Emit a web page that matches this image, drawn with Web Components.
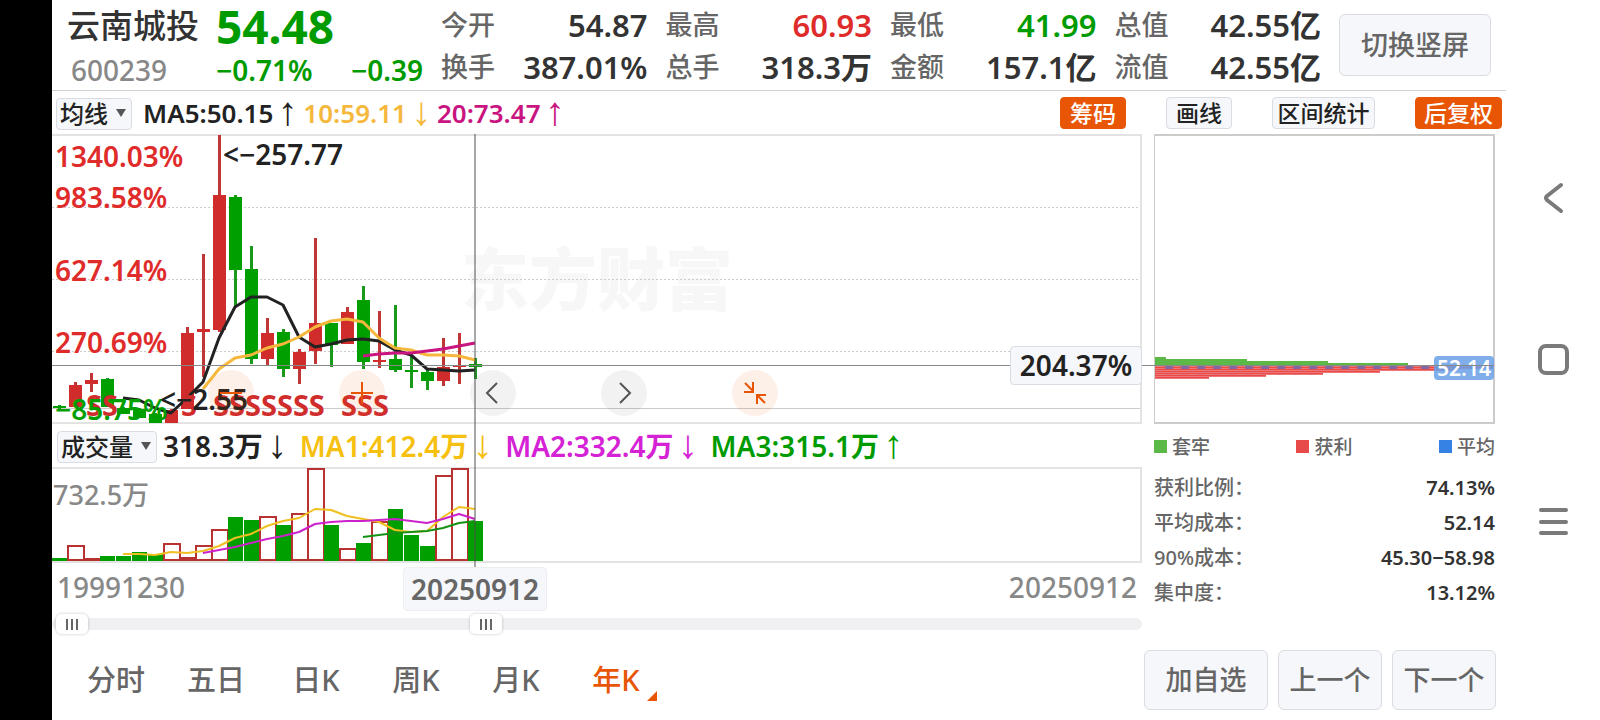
<!DOCTYPE html>
<html lang="zh-CN">
<head>
<meta charset="utf-8">
<meta name="viewport" content="width=device-width, initial-scale=1">
<title>云南城投 600239</title>
<style>
  body { margin: 0; background: #fff; font-family: "Noto Sans", "Noto Sans CJK SC", sans-serif; font-weight: 500; color: #222;
    --up: #d02c2c; --down: #009b00; --accent: #e85505; --muted: #888; --label: #666; --ink: #333; --panel: #f6f7fa; --edge: #d9dce2; --grid: #e3e3e3; }
</style>
</head>
<body>
<stock-app></stock-app>

<script>
const define = (name, html, setup) => customElements.define(name, class extends HTMLElement {
  connectedCallback() {
    if (this.shadowRoot) return;
    const t = document.createElement('template');
    t.innerHTML = '<style>*{box-sizing:border-box}button,select{font:inherit;color:inherit}</style>' + html;
    this.attachShadow({ mode: 'open' }).append(t.content.cloneNode(true));
    if (setup) setup(this, this.shadowRoot);
  }
});

/* Rounded push button; kind="accent" fills it with orange */
define('pill-button', `
<style>
  :host { display: block; font-size: 23px; height: 32px; color: #222; }
  button { display: block; width: 100%; height: 100%; padding: 0; border: 1px solid var(--edge); border-radius: 4px; background: var(--panel); white-space: nowrap; line-height: 28px; }
  :host([kind=accent]) button { background: var(--accent); border-color: var(--accent); color: #fff; }
  :host([size=large]) { font-size: 27px; height: 60px; color: var(--label); }
  :host([size=large]) button { border-radius: 6px; }
</style><button type="button"><slot></slot></button>`);

/* Drop-down of one indicator */
define('pick-list', `
<style>
  :host { display: block; position: relative; height: 32px; font-size: 24px; }
  select { appearance: none; width: 100%; height: 100%; margin: 0; padding: 0 0 0 3px; border: 1px solid var(--edge); border-radius: 4px; background: var(--panel); line-height: 28px; }
  i { position: absolute; right: 6px; top: 12px; border: 5px solid transparent; border-top: 8px solid #555; border-bottom: 0; pointer-events: none; }
</style><select></select><i></i>`, (el, root) => {
  const s = root.querySelector('select');
  s.setAttribute('aria-label', el.getAttribute('label'));
  s.add(new Option(el.getAttribute('value')));
});

/* Moving-average reading followed by a trend arrow */
define('ma-reading', `
<style>
  :host { display: flex; align-items: center; gap: 9px; white-space: nowrap; line-height: 32px; font-weight: 600; }
  .a { font: 40px/32px "Liberation Serif", serif; width: 11px; height: 34px; display: flex; justify-content: center; }
</style><span><slot></slot></span><span class="a"></span>`, (el, root) => {
  root.querySelector('.a').textContent = el.getAttribute('trend') === 'up' ? '↑' : '↓';
});

define('quote-stat', `
<style>
  :host { display: flex; justify-content: space-between; align-items: center; height: 42px; color: var(--ink); font-size: 31px; line-height: 42px; white-space: nowrap; }
  .l { font-size: 27px; color: var(--label); }
  .v { font-weight: 600; }
  :host([tone=up]) .v { color: #e02b2b; } :host([tone=down]) .v { color: var(--down); }
</style><span class="l"></span><span class="v"><slot></slot></span>`, (el, root) => {
  root.querySelector('.l').textContent = el.getAttribute('label');
});

define('quote-header', `
<style>
  :host { display: flex; align-items: center; gap: 18px; height: 91px; padding: 0 15px 0 15px; border-bottom: 1px solid #d0d0d0; }
  .id { display: grid; grid-template-columns: 149px 207px; height: 88px; grid-template-rows: 50px 38px; align-items: center; white-space: nowrap; }
  h1 { margin: 0; font-size: 33px; font-weight: 500; color: var(--ink); line-height: 48px; }
  .price { font-size: 46px; font-weight: 700; color: var(--down); line-height: 48px; }
  .code { font-size: 28px; color: var(--muted); padding-left: 4px; }
  .chg { display: flex; justify-content: space-between; font-size: 28px; font-weight: 600; color: var(--down); }
  .stats { flex: 1; display: grid; grid-template-columns: repeat(4, 1fr); column-gap: 18px; height: 86px; align-content: end; }
  pill-button { width: 152px; height: 62px; }
</style>
<div class="id"><h1>云南城投</h1><span class="price">54.48</span><span class="code">600239</span><div class="chg"><span>−0.71%</span><span>−0.39</span></div></div>
<div class="stats">
  <quote-stat label="今开">54.87</quote-stat><quote-stat label="最高" tone="up">60.93</quote-stat><quote-stat label="最低" tone="down">41.99</quote-stat><quote-stat label="总值">42.55亿</quote-stat>
  <quote-stat label="换手">387.01%</quote-stat><quote-stat label="总手">318.3万</quote-stat><quote-stat label="金额">157.1亿</quote-stat><quote-stat label="流值">42.55亿</quote-stat>
</div>
<pill-button size="large">切换竖屏</pill-button>`);

define('chart-toolbar', `
<style>
  :host { display: flex; align-items: center; height: 43px; padding: 0 4px; font-size: 26px; }
  pick-list { width: 76px; margin-right: 11px; }
  .ma { display: flex; gap: 10px; flex: 1; }
  .acts { display: grid; grid-template-columns: 66px 66px 103px 87px; gap: 40px; }
</style>
<pick-list label="指标" value="均线"></pick-list>
<div class="ma"><ma-reading trend="up">MA5:50.15</ma-reading><ma-reading trend="down" style="color:#f5b83d">10:59.11</ma-reading><ma-reading trend="up" style="color:#c9157f">20:73.47</ma-reading></div>
<div class="acts"><pill-button kind="accent">筹码</pill-button><pill-button>画线</pill-button><pill-button>区间统计</pill-button><pill-button kind="accent">后复权</pill-button></div>`);

const STEP = 16, cx = i => 7 + STEP * i;
const poly = (from, ys, color, w) =>
  `<polyline fill="none" stroke="${color}" stroke-width="${w}" stroke-linejoin="round" points="${ys.map((y, k) => cx(from + k) + ',' + y).join(' ')}"/>`;

/* Candles: [up?, high, bodyTop, bodyBottom, low] */
const CANDLES = [
  [0,271,272,274,275],[1,248,251,273,273],[1,239,246,250,258],[0,244,245,273,273],[0,273,274,280,280],[0,274,275,284,284],[0,279,280,289,289],[1,275,276,289,289],
  [1,193,199,275,275],[1,120,195,198,243],[1,1,61,196,198],[0,61,63,136,173],[0,112,135,225,230],[1,184,199,225,231],[0,195,198,235,243],[1,215,218,235,250],
  [1,104,189,217,230],[0,189,189,211,233],[1,173,178,210,210],[0,152,166,228,235],[1,177,226,228,234],[0,171,225,236,238],[0,222,236,238,254],[0,234,238,247,256],
  [1,204,233,247,252],[1,199,231,232,250],[0,224,230,233,245]];

define('candle-chart', `
<style>
  :host { display: block; position: relative; height: 290px; border: solid var(--grid); border-width: 2px 2px 2px 0; }
  svg { display: block; width: 100%; height: 290px; margin: -2px 0; overflow: visible; font-size: 28px; }
  .tools { position: absolute; left: 156px; top: 234px; display: flex; gap: 85px; }
  button { width: 46px; height: 46px; padding: 11px; border: 0; border-radius: 50%; background: rgba(0,0,0,.05); }
  button.o { background: rgba(232,85,5,.09); }
  button svg { width: 24px; height: 24px; margin: 0; fill: none; stroke: currentColor; stroke-width: 2; color: #555; }
  .o svg { color: var(--accent); }
</style>
<svg class="plot" role="img" aria-label="年K线"></svg>
<div class="tools">
  <button class="o" aria-label="缩小"><svg viewBox="0 0 24 24"><path d="M1 12H23"/></svg></button>
  <button class="o" aria-label="放大"><svg viewBox="0 0 24 24"><path d="M1 12H23M12 1V23"/></svg></button>
  <button aria-label="左移"><svg viewBox="0 0 24 24"><path d="M16 2L6 12L16 22"/></svg></button>
  <button aria-label="右移"><svg viewBox="0 0 24 24"><path d="M8 2L18 12L8 22"/></svg></button>
  <button class="o" aria-label="收起"><svg viewBox="0 0 24 24"><path d="M2 2L10 10M1 11H10V1M22 22L14 14M23 14H14V23"/></svg></button>
</div>`, (el, root) => {
  const up = '#d02c2c', down = '#009f00';
  let s = '<text x="409" y="171" font-size="68" font-weight="900" fill="#f7f7f7">东方财富</text>';
  for (const y of [73, 145, 217]) s += `<line x1="0" x2="100%" y1="${y}.5" y2="${y}.5" stroke="#ccc" stroke-dasharray="2 2"/>`;
  s += '<line x1="0" x2="100%" y1="274.5" y2="274.5" stroke="#ccc"/>';
  CANDLES.forEach(([u, h, t, b, l], i) => {
    const c = u ? up : down, x = cx(i);
    s += `<rect x="${x - 1}" y="${h}" width="3" height="${l - h}" fill="${u ? '#c03535' : '#1a9a1a'}"/><rect x="${x - 6}" y="${t}" width="13" height="${Math.max(b - t, 2)}" fill="${c}"/>`;
  });
  s += poly(4, [264,266,274,279,264,248,204,173,163,163,171,203,213,210,206,205,207,216,221,235,236,237,236], '#222', 3);
  s += poly(9, [255,235,224,221,214,210,203,193,187,185,188,204,214,216,221,221,222,226], '#f5b83d', 3);
  s += poly(19, [222,220,219,219,217,215,212,209], '#c9157f', 3);
  s += '<g font-weight="600">' + [[33,'1340.03%'],[74,'983.58%'],[147,'627.14%'],[219,'270.69%']].map(([y, t]) => `<text x="3" y="${y}" fill="#e02b2b">${t}</text>`).join('') + '</g>';
  s += `<g fill="${up}" font-size="29" font-weight="700">` + [[34,'SS'],[129,'S'],[161,'SSSSSSS'],[289,'SSS']].map(([x, t]) => `<text x="${x}" y="282">${t}</text>`).join('') + '</g>';
  s += `<g font-weight="600"><text x="3" y="286" fill="${down}">−85.75%</text><g fill="#222"><text x="171" y="31">&lt;−257.77</text><text x="108" y="276">&lt;−2.55</text></g></g>`;
  root.querySelector('.plot').innerHTML = s;
});

/* Volumes: [up?, top of the bar] */
const VOLS = [[0,90],[1,78],[1,91],[0,88],[0,88],[0,84],[0,86],[1,76],[1,90],[1,78],[1,62],[0,49],[0,52],[1,49],[0,57],[1,46],[1,1],[0,57],[1,81],[0,75],[1,54],[0,41],[0,67],[0,78],[1,8],[1,1],[0,53]];
define('volume-chart', `
<style>
  :host { display: block; height: 96px; border: solid var(--grid); border-width: 2px 2px 2px 0; }
  svg { display: block; width: 100%; height: 94px; margin-top: -2px; font-size: 27px; }
</style><svg role="img" aria-label="成交量"></svg>`, (el, root) => {
  let s = '';
  VOLS.forEach(([u, t], i) => {
    const x = cx(i);
    s += u ? `<rect x="${x - 7}" y="${t + 1}" width="16" height="${Math.max(92 - t, 1)}" fill="#fff" stroke="#b83232" stroke-width="2"/>`
      : `<rect x="${x - 7}" y="${t + 1}" width="15" height="${93 - t}" fill="#009f00"/>`;
  });
  s += '<g transform="translate(0 1)">';
  s += poly(4, [86,86,87,84,85,83,78,70,66,58,53,50,41,42,48,51,54,62,64,63,49,39,41], '#f0c020', 2);
  s += poly(9, [85,82,79,75,71,68,64,56,54,53,53,52,51,53,55,51,46,51], '#cc22cc', 2);
  s += poly(19, [69,67,65,64,63,60,55,53], '#159215', 2);
  s += '</g><text x="1" y="38" fill="#888">732.5万</text>';
  root.querySelector('svg').innerHTML = s;
});

define('time-range', `
<style>
  :host { display: grid; height: 20px; align-items: center; }
  :host::before { content: ""; grid-area: 1/1; height: 12px; border-radius: 6px; background: #f0f0f2; }
  input { grid-area: 1/1; appearance: none; width: 100%; height: 20px; margin: 0; background: none; pointer-events: none; }
  input::-webkit-slider-thumb { appearance: none; pointer-events: auto; width: 32px; height: 20px; border-radius: 5px; box-shadow: 0 0 3px rgba(0,0,0,.25);
    background: linear-gradient(#666,#666) 10px 5px/2px 11px no-repeat, linear-gradient(#666,#666) 15px 5px/2px 11px no-repeat, linear-gradient(#666,#666) 20px 5px/2px 11px no-repeat, #fff; }
</style>
<input type="range" min="0" max="1000" value="4" aria-label="起始"><input type="range" min="0" max="1000" value="395" aria-label="结束">`);

define('chart-column', `
<style>
  :host { display: block; position: relative; min-width: 0; }
  .vh { display: flex; align-items: center; height: 43px; padding-left: 5px; font-size: 28px; gap: 17px; }
  .vh pick-list { width: 100px; margin-right: -11px; }
  .dates { display: flex; justify-content: space-between; height: 51px; padding: 4px 5px 0; font-size: 28px; line-height: 40px; color: var(--muted); }
  .v { position: absolute; left: 422px; top: 0; width: 2px; height: 433px; background: rgba(80,80,80,.5); }
  .day { position: absolute; left: 351px; top: 433px; width: 144px; height: 44px; border: 1px solid #eceef2; border-radius: 4px; background: var(--panel); color: var(--label); font-size: 28px; font-weight: 600; line-height: 43px; text-align: center; }
</style>
<candle-chart></candle-chart>
<div class="vh"><pick-list label="副图" value="成交量"></pick-list><ma-reading trend="down">318.3万</ma-reading><ma-reading trend="down" style="color:#f5c010">MA1:412.4万</ma-reading><ma-reading trend="down" style="color:#d422d4">MA2:332.4万</ma-reading><ma-reading trend="up" style="color:#009b00">MA3:315.1万</ma-reading></div>
<volume-chart></volume-chart>
<div class="dates"><time>19991230</time><time>20250912</time></div>
<time-range></time-range>
<div class="v"></div><time class="day">20250912</time>`);

define('chip-panel', `
<style>
  :host { display: block; color: var(--label); font-size: 20px; }
  .box { position: relative; height: 290px; border: 2px solid #ccc; border-left-width: 1px; }
  svg { display: block; width: 100%; height: 286px; }
  .avg { position: absolute; right: -1px; top: 220px; width: 60px; height: 24px; border-radius: 4px; background: rgba(105,160,232,.85); color: #fff; font-size: 21px; font-weight: 600; line-height: 24px; text-align: center; }
  .legend { display: flex; justify-content: space-between; height: 44px; align-items: center; font-size: 19px; }
  .legend span { display: flex; align-items: center; gap: 5px; }
  .legend i { width: 13px; height: 13px; }
  table { width: 100%; border-collapse: collapse; margin-top: 2px; }
  th { text-align: left; font-weight: 500; } td { text-align: right; color: var(--ink); font-weight: 600; }
  th, td { padding: 0; height: 35px; line-height: 30px; }
</style>
<div class="box"><svg role="img" aria-label="筹码分布"></svg><span class="avg">52.14</span></div>
<div class="legend"><span><i style="background:#5cb847"></i>套牢</span><span><i style="background:#e84a4a"></i>获利</span><span><i style="background:#3582e4"></i>平均</span></div>
<table>
  <tr><th scope="row">获利比例：</th><td>74.13%</td></tr><tr><th scope="row">平均成本：</th><td>52.14</td></tr>
  <tr><th scope="row">90%成本：</th><td>45.30−58.98</td></tr><tr><th scope="row">集中度：</th><td>13.12%</td></tr>
</table>`, (el, root) => {
  let s = '';
  [[221,11],[223,92],[225,173],[227,253]].forEach(([y, w]) => s += `<rect y="${y}" width="${w}" height="2" fill="#5cb847"/>`);
  [[229,338],[231,338],[233,300],[235,225],[237,168],[239,111],[241,54]].forEach(([y, w]) => s += `<rect y="${y}" width="${w}" height="2" fill="#e84a4a"/><rect y="${y + 1}" width="${w}" height="1" fill="#fff" opacity=".25"/>`);
  s += '<line x1="10" x2="100%" y1="231.5" y2="231.5" stroke="#8668a0" stroke-width="3" stroke-dasharray="8 8"/>';
  root.querySelector('svg').innerHTML = s;
});

define('period-bar', `
<style>
  :host { display: flex; align-items: center; justify-content: space-between; padding: 16px 10px 10px 14px; font-size: 29px; color: var(--label); }
  nav { display: flex; }
  a { position: relative; width: 100px; text-align: center; color: inherit; text-decoration: none; line-height: 60px; height: 60px; white-space: nowrap; }
  a[aria-current] { color: var(--accent); }
  a[aria-current]::after { content: ""; position: absolute; right: 9px; bottom: 9px; border: 5px solid transparent; border-right-color: var(--accent); border-bottom-color: var(--accent); }
  .b { display: grid; grid-template-columns: 124px 104px 104px; gap: 10px; }
</style>
<nav><a href="#m">分时</a><a href="#5d">五日</a><a href="#d">日K</a><a href="#w">周K</a><a href="#mo">月K</a><a href="#y" aria-current="page">年K</a></nav>
<div class="b"><pill-button size="large">加自选</pill-button><pill-button size="large">上一个</pill-button><pill-button size="large">下一个</pill-button></div>`);

define('system-nav', `
<style>
  :host { display: flex; flex-direction: column; justify-content: center; align-items: center; gap: 122px; }
  button { width: 40px; height: 40px; padding: 0; border: 0; background: none; }
  svg { display: block; width: 40px; height: 40px; fill: none; stroke: #7a7a7a; stroke-width: 4; stroke-linecap: round; stroke-linejoin: round; }
</style>
<button aria-label="返回"><svg viewBox="0 0 40 40"><path d="M28 7L14 18Q12 20 14 22L28 33"/></svg></button>
<button aria-label="主页"><svg viewBox="0 0 40 40"><rect x="7" y="6" width="27" height="27" rx="6"/></svg></button>
<button aria-label="任务"><svg viewBox="0 0 40 40"><path d="M8 8H33M8 20H33M8 31H33"/></svg></button>`);

define('stock-app', `
<style>
  :host { display: grid; grid-template-columns: 52px minmax(0, 1fr) 94px; min-height: 100vh; background: #fff; }
  .edge { background: #000; }
  .body { position: relative; display: grid; grid-template-columns: minmax(0, 1fr) 341px; column-gap: 12px; padding-right: 11px; }
  .h { position: absolute; left: 0; right: 12px; top: 231px; height: 1px; background: #888; }
  .pct { position: absolute; right: 364px; top: 212px; width: 132px; height: 39px; border: 1px solid var(--edge); border-radius: 4px; background: var(--panel); font-size: 28px; font-weight: 600; line-height: 37px; text-align: center; }
</style>
<div class="edge"></div>
<main>
  <quote-header></quote-header>
  <chart-toolbar></chart-toolbar>
  <div class="body"><chart-column></chart-column><chip-panel></chip-panel><div class="h"></div><span class="pct">204.37%</span></div>
  <period-bar></period-bar>
</main>
<system-nav></system-nav>`);
</script>
</body>
</html>
